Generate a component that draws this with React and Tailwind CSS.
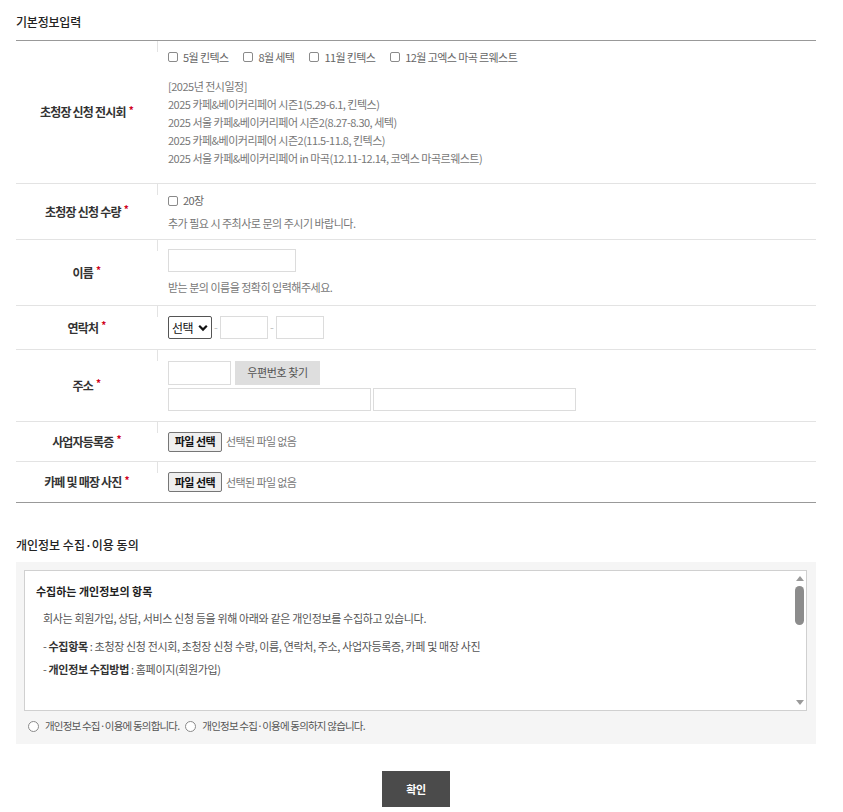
import React from "react";

const Req = () => <span className="ml-[3px] text-[#d0021b] text-[10px] relative top-[-3px]">*</span>;

const Box = () => (
  <span className="inline-block w-[10px] h-[10px] border border-[#8a8a8a] rounded-[2px] bg-white shrink-0" />
);

const Radio = () => (
  <span className="inline-block w-[11px] h-[11px] border border-[#8a8a8a] rounded-full bg-white shrink-0" />
);

function Row({ label, h, last, top, children }) {
  return (
    <div className={`flex ${h} border-b ${last ? "border-[#999]" : "border-[#e3e3e3]"}`}>
      <div className="w-[141px] flex items-center justify-center text-[12px] font-bold text-[#333] tracking-[-0.8px]">
        <span>{label}</span>
        <Req />
      </div>
      <div className={`relative flex-1 pl-[11px] flex flex-col ${top ? "justify-start pt-[7px]" : "justify-center"}`}>
        <span className="absolute left-0 top-0 w-px h-[11px] bg-[#e3e3e3]" />
        {children}
      </div>
    </div>
  );
}

const Input = ({ w }) => <span className={`inline-block ${w} h-[23px] border border-[#dcdcdc] bg-white`} />;

const FileBtn = () => (
  <div className="flex items-center gap-[4px]">
    <span className="inline-flex items-center justify-center w-[54px] h-[20px] border border-[#767676] rounded-[2px] bg-[#efefef] text-[11px] font-bold text-[#111] tracking-[-0.5px]">
      파일 선택
    </span>
    <span className="text-[11px] text-[#777] tracking-[-0.6px]">선택된 파일 없음</span>
  </div>
);

export default function App() {
  const checks = ["5월 킨텍스", "8월 세텍", "11월 킨텍스", "12월 고엑스 마곡 르웨스트"];
  const sched = [
    "[2025년 전시일정]",
    "2025 카페&베이커리페어 시즌1(5.29-6.1, 킨텍스)",
    "2025 서울 카페&베이커리페어 시즌2(8.27-8.30, 세텍)",
    "2025 카페&베이커리페어 시즌2(11.5-11.8, 킨텍스)",
    "2025 서울 카페&베이커리페어 in 마곡(12.11-12.14, 코엑스 마곡르웨스트)",
  ];
  return (
    <div className="w-[843px] min-h-[812px] bg-white font-['Noto_Sans_CJK_KR',sans-serif] text-[#333]">
      <div className="ml-[16px] w-[800px] pt-[14px]">
        <div className="h-[16px] leading-[16px] text-[12px] font-medium tracking-[-0.2px] text-[#222] mb-[10px]">
          기본정보입력
        </div>
        <div className="border-t border-[#999]">
          <Row label="초청장 신청 전시회" h="h-[143px]" top>
            <div className="flex items-center h-[18px] text-[11px] text-[#666] tracking-[-0.6px]">
              {checks.map((c, i) => (
                <label key={i} className="flex items-center gap-[5px] mr-[15px]">
                  <Box />
                  <span>{c}</span>
                </label>
              ))}
            </div>
            <div className="mt-[11px] text-[11px] leading-[18px] text-[#777] tracking-[-0.5px]">
              {sched.map((s, i) => (
                <div key={i}>{s}</div>
              ))}
            </div>
          </Row>
          <Row label="초청장 신청 수량" h="h-[56px]">
            <label className="flex items-center gap-[5px] h-[18px] text-[11px] text-[#666] tracking-[-0.6px]">
              <Box />
              <span>20장</span>
            </label>
            <div className="mt-[4px] h-[18px] leading-[18px] text-[11px] text-[#777] tracking-[-0.5px]">
              추가 필요 시 주최사로 문의 주시기 바랍니다.
            </div>
          </Row>
          <Row label="이름" h="h-[66px]">
            <Input w="w-[128px]" />
            <div className="mt-[6px] h-[18px] leading-[18px] text-[11px] text-[#777] tracking-[-0.5px]">
              받는 분의 이름을 정확히 입력해주세요.
            </div>
          </Row>
          <Row label="연락처" h="h-[44px]">
            <div className="flex items-center text-[11px] text-[#bbb]">
              <span className="flex items-center justify-between w-[44px] h-[23px] border border-[#555] rounded-[2px] bg-white pl-[3px] pr-[3px] text-[12px] text-[#111] tracking-[-0.5px]">
                선택
                <svg width="10" height="8" viewBox="0 0 10 8">
                  <path d="M1.2 1.8 L5 5.6 L8.8 1.8" fill="none" stroke="#111" strokeWidth="2.2" />
                </svg>
              </span>
              <span className="w-[8px] text-center">-</span>
              <Input w="w-[48px]" />
              <span className="w-[8px] text-center">-</span>
              <Input w="w-[48px]" />
            </div>
          </Row>
          <Row label="주소" h="h-[72px]">
            <div className="flex items-center gap-[4px]">
              <span className="inline-block w-[63px] h-[24px] border border-[#dcdcdc] bg-white" />
              <span className="inline-flex items-center justify-center w-[85px] h-[24px] bg-[#dedede] text-[11px] text-[#555] tracking-[-0.4px]">
                우편번호 찾기
              </span>
            </div>
            <div className="flex items-center gap-[2px] mt-[3px]">
              <Input w="w-[203px]" />
              <Input w="w-[203px]" />
            </div>
          </Row>
          <Row label="사업자등록증" h="h-[40px]">
            <FileBtn />
          </Row>
          <Row label="카페 및 매장 사진" h="h-[41px]" last>
            <FileBtn />
          </Row>
        </div>

        <div className="mt-[34px] h-[16px] leading-[16px] text-[12px] font-medium tracking-[0px] text-[#222]">
          개인정보 수집·이용 동의
        </div>
        <div className="mt-[9px] bg-[#f5f5f5] pt-[8px] pl-[8px] pr-[9px] h-[182px]">
          <div className="flex h-[141px] border border-[#d0d0d0] bg-white">
            <div className="flex-1 pl-[11px] pt-[11px] overflow-hidden">
              <div className="h-[18px] leading-[18px] text-[11px] font-bold text-[#222] tracking-[0px]">
                수집하는 개인정보의 항목
              </div>
              <div className="pl-[7px] text-[11px] text-[#555] tracking-[-0.35px]">
                <div className="mt-[9px] h-[18px] leading-[18px]">
                  회사는 회원가입, 상담, 서비스 신청 등을 위해 아래와 같은 개인정보를 수집하고 있습니다.
                </div>
                <div className="mt-[10px] h-[18px] leading-[18px]">
                  - <b className="text-[#333]">수집항목</b> : 초청장 신청 전시회, 초청장 신청 수량, 이름, 연락처, 주소, 사업자등록증, 카페 및 매장 사진
                </div>
                <div className="mt-[5px] h-[18px] leading-[18px]">
                  - <b className="text-[#333]">개인정보 수집방법</b> : 홈페이지(회원가입)
                </div>
              </div>
            </div>
            <div className="w-[13px] flex flex-col items-center pt-[5px] pb-[5px]">
              <svg width="8" height="5" viewBox="0 0 8 5">
                <path d="M0 5 L4 0 L8 5 Z" fill="#9a9a9a" />
              </svg>
              <span className="mt-[5px] w-[9px] h-[39px] rounded-full bg-[#8c8c8c]" />
              <span className="flex-1" />
              <svg width="8" height="5" viewBox="0 0 8 5">
                <path d="M0 0 L8 0 L4 5 Z" fill="#9a9a9a" />
              </svg>
            </div>
          </div>
          <div className="flex items-center h-[30px] pl-[4px] text-[10.5px] text-[#555] tracking-[-0.8px]">
            <Radio />
            <span className="ml-[6px] mr-[6px]">개인정보 수집·이용에 동의합니다.</span>
            <Radio />
            <span className="ml-[6px]">개인정보 수집·이용에 동의하지 않습니다.</span>
          </div>
        </div>

        <div className="flex justify-center mt-[27px]">
          <span className="inline-flex items-center justify-center w-[68px] h-[36px] bg-[#4b4b4b] text-white text-[11px] font-bold tracking-[-0.3px]">
            확인
          </span>
        </div>
      </div>
    </div>
  );
}
